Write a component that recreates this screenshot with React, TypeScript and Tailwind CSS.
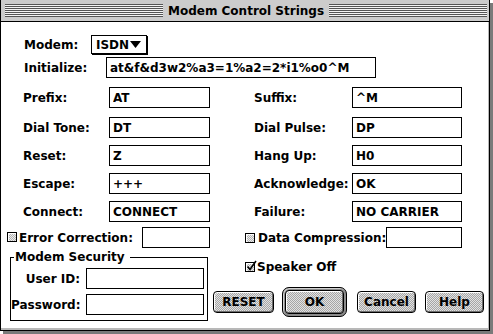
import React from 'react';

// Mac OS 8 "Platinum" style modem settings dialog

function Field({ value = '', className = '' }: { value?: string; className?: string }) {
  return (
    <input
      readOnly
      value={value}
      className={`h-[21px] border border-black bg-white px-[3px] outline-none ${className}`}
    />
  );
}

function Checkbox({ checked = false }: { checked?: boolean }) {
  return (
    <span className="relative inline-block w-[10px] h-[10px] shrink-0 border border-black bg-[image:repeating-conic-gradient(#b4b4b4_0%_25%,#ececec_0%_50%)] bg-[length:2px_2px] shadow-[inset_1px_1px_0_#fff]">
      {checked && (
        <svg className="absolute left-0 top-[-3px]" width="11" height="12" viewBox="0 0 11 12">
          <path d="M1.5 6.5 L4 9.5 L10 1" fill="none" stroke="#000" strokeWidth="1.6" />
        </svg>
      )}
    </span>
  );
}

function Button({ label, className = '' }: { label: string; className?: string }) {
  return (
    <button className={`h-[22px] rounded-[4px] border border-black bg-[image:repeating-conic-gradient(#a6a6a6_0%_25%,#e2e2e2_0%_50%)] bg-[length:2px_2px] shadow-[inset_1px_1px_0_#fff,inset_-1px_-1px_0_#6e6e6e] text-black ${className}`}>
      {label}
    </button>
  );
}

function PairRow({
  left,
  leftValue,
  right,
  rightValue,
  className = '',
}: {
  left: string;
  leftValue: string;
  right: string;
  rightValue: string;
  className?: string;
}) {
  return (
    <div className={`flex items-center h-[21px] ${className}`}>
      <div className="flex items-center w-[244px]">
        <span className="pl-[22px] w-[108px] shrink-0">{left}</span>
        <Field value={leftValue} className="w-[101px]" />
      </div>
      <div className="flex items-center">
        <span className="pl-[9px] w-[107px] shrink-0 whitespace-nowrap">{right}</span>
        <Field value={rightValue} className="w-[110px]" />
      </div>
    </div>
  );
}

export default function App() {
  return (
    <div className="w-[493px] h-[334px] bg-white font-['DejaVu_Sans',sans-serif] font-bold text-[12px] leading-[14px] text-black">
      <div className="w-[490px] h-[331px] flex flex-col border-x border-b border-black bg-white shadow-[inset_-1px_-2px_0_#b8b8b8,3px_3px_0_#7a7a7a]">
        {/* title bar */}
        <div className="h-[22px] shrink-0 flex items-center border-b border-black bg-[#cccccc] pl-[4px] pr-[2px]">
          <div className="flex-1 h-[13px] bg-[image:repeating-linear-gradient(to_bottom,#555555_0px,#555555_1px,#f4f4f4_1px,#f4f4f4_2px)]" />
          <span className="px-[5px] text-[12px] whitespace-nowrap">Modem Control Strings</span>
          <div className="flex-1 h-[13px] bg-[image:repeating-linear-gradient(to_bottom,#555555_0px,#555555_1px,#f4f4f4_1px,#f4f4f4_2px)]" />
        </div>

        {/* Modem */}
        <div className="flex items-center h-[19px] mt-[13px]">
          <span className="pl-[23px] w-[90px] shrink-0">Modem:</span>
          <div className="flex items-center w-[56px] h-[19px] border border-black bg-white shadow-[1px_1px_0_#000] pl-[4px]">
            <span>ISDN</span>
            <svg className="ml-[1px]" width="11" height="7" viewBox="0 0 11 7">
              <path d="M0 0 H11 L5.5 7 Z" fill="#000" />
            </svg>
          </div>
        </div>

        {/* Initialize */}
        <div className="flex items-center h-[21px] mt-[3px]">
          <span className="pl-[23px] w-[105px] shrink-0">Initialize:</span>
          <Field value="at&f&d3w2%a3=1%a2=2*i1%o0^M" className="w-[270px]" />
        </div>

        <PairRow left="Prefix:" leftValue="AT" right="Suffix:" rightValue="^M" className="mt-[9px]" />
        <PairRow left="Dial Tone:" leftValue="DT" right="Dial Pulse:" rightValue="DP" className="mt-[9px]" />
        <PairRow left="Reset:" leftValue="Z" right="Hang Up:" rightValue="H0" className="mt-[7px]" />
        <PairRow left="Escape:" leftValue="+++" right="Acknowledge:" rightValue="OK" className="mt-[7px]" />
        <PairRow left="Connect:" leftValue="CONNECT" right="Failure:" rightValue="NO CARRIER" className="mt-[7px]" />

        {/* checkboxes with fields */}
        <div className="flex items-center h-[21px] mt-[5px]">
          <div className="flex items-center w-[244px]">
            <span className="ml-[6px]">
              <Checkbox />
            </span>
            <span className="ml-[2px] w-[123px] shrink-0 whitespace-nowrap">Error Correction:</span>
            <Field className="w-[68px]" />
          </div>
          <div className="flex items-center w-[217px]">
            <Checkbox />
            <span className="ml-[3px] whitespace-nowrap">Data Compression:</span>
            <Field className="flex-1 min-w-0" />
          </div>
        </div>

        {/* bottom section */}
        <div className="flex mt-[2px]">
          <fieldset className="ml-[9px] w-[198px] h-[71px] border border-black">
            <legend className="ml-[3px] pl-[1px] pr-[5px] leading-[14px]">Modem Security</legend>
            <div className="flex items-center mt-[4px]">
              <span className="w-[69px] shrink-0 text-right whitespace-nowrap">User ID:</span>
              <Field className="ml-[6px] w-[118px]" />
            </div>
            <div className="flex items-center mt-[5px]">
              <span className="w-[69px] shrink-0 text-right whitespace-nowrap">Password:</span>
              <Field className="ml-[6px] w-[118px]" />
            </div>
          </fieldset>

          <div className="ml-[5px] flex flex-col">
            <div className="flex items-center h-[12px] mt-[11px] ml-[32px]">
              <Checkbox checked />
              <span className="ml-[2px]">Speaker Off</span>
            </div>
            <div className="flex items-center h-[30px] mt-[14px]">
              <Button label="RESET" className="w-[61px]" />
              <div className="ml-[8px] w-[65px] h-[30px] rounded-[7px] border border-black bg-[#8c8c8c] p-[2px] shadow-[inset_1px_1px_0_#d0d0d0]">
                <Button label="OK" className="w-full h-full" />
              </div>
              <Button label="Cancel" className="ml-[10px] w-[59px]" />
              <Button label="Help" className="ml-[9px] w-[59px]" />
            </div>
          </div>
        </div>
      </div>
    </div>
  );
}
